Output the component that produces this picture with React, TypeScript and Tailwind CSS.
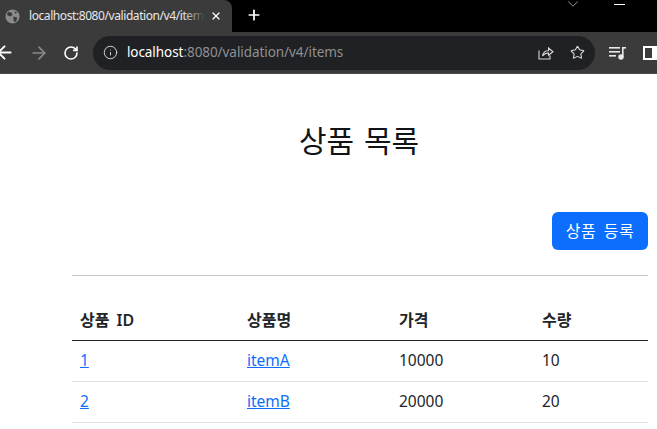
import React from "react";
import { ArrowLeft, ArrowRight, RotateCw, Info, Star, X, Plus, ChevronDown } from "lucide-react";

const font = { fontFamily: '"Noto Sans", "Noto Sans CJK KR", sans-serif' };
const rows = [
  { id: "1", name: "itemA", price: "10000", qty: "10" },
  { id: "2", name: "itemB", price: "20000", qty: "20" },
];

function Globe() {
  return (
    <svg width="15" height="15" viewBox="0 0 16 16" className="shrink-0">
      <circle cx="8" cy="8" r="7.5" fill="#8a8b8d" />
      <path d="M4 3l3 1 1 2-2 2-3-1-1-2zM9 8l4 1-1 4-2 1-1-3zM10 2l3 2-2 1z" fill="#3b3b3b" />
    </svg>
  );
}

function ShareIcon() {
  return (
    <svg width="16" height="15" viewBox="0 0 16 15" fill="none" stroke="#d8d8d8" strokeWidth="1.1">
      <path d="M1 5.5V14h11V10.5" />
      <path d="M4.5 11c.5-3.5 3-5.2 6-5.2V3L15 6.8 10.5 10.3V8c-2.500 0-4.500 1-6 3z" />
    </svg>
  );
}

function Playlist() {
  return (
    <svg width="17" height="14" viewBox="0 0 17 14" fill="#e8e8e8">
      <rect x="0" y="1" width="11" height="1.6" />
      <rect x="0" y="5" width="11" height="1.6" />
      <rect x="0" y="9" width="7" height="1.6" />
      <rect x="13" y="1" width="1.6" height="10" />
      <rect x="13" y="1" width="4" height="1.6" />
      <circle cx="12" cy="11" r="2.700" />
    </svg>
  );
}

export default function App() {
  return (
    <div className="w-[657px] h-[429px] overflow-hidden bg-white flex flex-col" style={font}>
      <div className="h-8 bg-black flex shrink-0">
        <div className="w-[232px] bg-[#3b3b3b] rounded-tr-lg flex items-center pl-[5px] pr-[10px] text-[12px] text-[#e8e8e8]">
          <Globe />
          <div className="relative ml-[9px] w-[176px] overflow-hidden">
            <div className="whitespace-nowrap tracking-[-0.42px]">localhost:8080/validation/v4/items</div>
            <div className="absolute inset-y-0 right-0 w-[22px] bg-gradient-to-r from-transparent to-[#3b3b3b]" />
          </div>
          <X size={12} strokeWidth={2.4} className="text-white ml-auto" />
        </div>
        <Plus size={16} strokeWidth={2.6} className="text-white ml-[14px] mt-[7px]" />
        <div className="ml-auto flex items-start">
          <ChevronDown size={18} strokeWidth={1} className="text-[#c8c8c8] mr-[32px] -mt-[5px]" />
          <div className="w-[11px] h-px bg-white mt-1 mr-[32px]" />
        </div>
      </div>
      <div className="h-[42px] bg-[#3b3b3b] border-b border-[#4a4a4a] flex items-center shrink-0">
        <ArrowLeft size={21} strokeWidth={2.2} className="text-white -ml-[6px]" />
        <ArrowRight size={20} strokeWidth={2} className="text-[#8a8a8a] ml-[14px]" />
        <RotateCw size={16} strokeWidth={2.4} className="text-white ml-[14px]" />
        <div className="ml-[14px] w-[503px] h-[34px] rounded-full bg-[#202124] flex items-center pl-[10px] pr-[10px] text-[13.5px]">
          <Info size={15} strokeWidth={1.6} className="text-[#d0d0d0]" />
          <span className="ml-[9px] tracking-[-0.06px] whitespace-nowrap text-[#8f9092]">
            <span className="text-white">localhost</span>:8080/validation/v4/items
          </span>
          <div className="ml-auto flex items-center gap-[16px]">
            <ShareIcon />
            <Star size={15} strokeWidth={1.7} className="text-[#e0e0e0]" />
          </div>
        </div>
        <div className="ml-[14px]"><Playlist /></div>
        <div className="ml-[17px] w-[14px] h-[14px] border-2 border-white border-r-[5px]" />
      </div>
      <div className="flex-1 pl-[72px] pr-[9px] overflow-hidden">
        <h2 className="text-[30px] text-center leading-[36px] mt-[49px] pr-[2px] text-[#111417] [word-spacing:2px]">상품 목록</h2>
        <div className="flex justify-end mt-[53px]">
          <button className="h-[38px] w-[96px] rounded-md bg-[#0d6efd] text-white text-[16px] tracking-[0.5px] [word-spacing:3px]">상품 등록</button>
        </div>
        <hr className="border-0 border-t border-[#c9c9c9] mt-[25px]" />
        <table className="w-full mt-[24px] border-collapse text-[15.5px] text-[#212529]">
          <thead>
            <tr className="border-b border-[#212529] h-[40px]">
              <th className="w-[167px] px-2 text-left font-semibold text-[16px] [word-spacing:3px]">상품 ID</th>
              <th className="w-[152px] px-2 text-left font-semibold text-[16px]">상품명</th>
              <th className="w-[143px] px-2 text-left font-semibold text-[16px]">가격</th>
              <th className="px-2 text-left font-semibold text-[16px]">수량</th>
            </tr>
          </thead>
          <tbody>
            {rows.map((r) => (
              <tr key={r.id} className="border-b border-[#dee2e6] h-[41px]">
                <td className="px-2"><a href="#" className="text-[#0d6efd] underline">{r.id}</a></td>
                <td className="px-2"><a href="#" className="text-[#0d6efd] underline">{r.name}</a></td>
                <td className="px-2">{r.price}</td>
                <td className="px-2">{r.qty}</td>
              </tr>
            ))}
          </tbody>
        </table>
      </div>
    </div>
  );
}
